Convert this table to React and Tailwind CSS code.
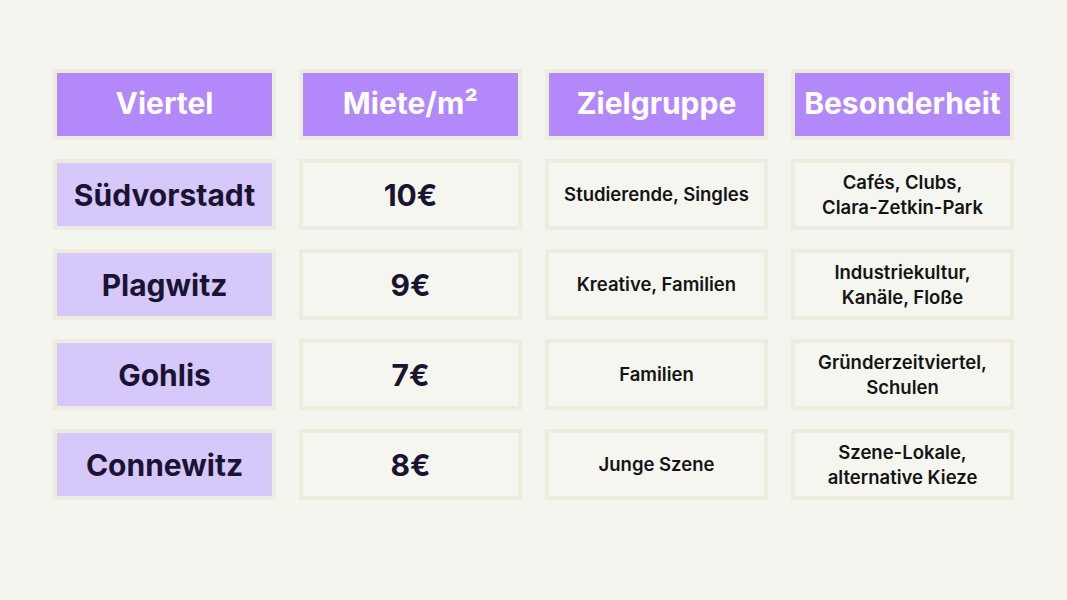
import React from 'react'

const headers = ['Viertel', 'Miete/m²', 'Zielgruppe', 'Besonderheit']

const rows = [
  { name: 'Südvorstadt', rent: '10€', group: 'Studierende, Singles', extra: ['Cafés, Clubs,', 'Clara-Zetkin-Park'] },
  { name: 'Plagwitz', rent: '9€', group: 'Kreative, Familien', extra: ['Industriekultur,', 'Kanäle, Floße'] },
  { name: 'Gohlis', rent: '7€', group: 'Familien', extra: ['Gründerzeitviertel,', 'Schulen'] },
  { name: 'Connewitz', rent: '8€', group: 'Junge Szene', extra: ['Szene-Lokale,', 'alternative Kieze'] },
]

const cell = 'h-[71px] border-4 border-[#edecdf] flex items-center justify-center text-center'

export default function App() {
  return (
    <div className="w-[1067px] h-[600px] bg-[#f5f5f0] pt-[69px] pl-[53px]" style={{ fontFamily: 'Inter, "Noto Sans", sans-serif' }}>
      <div className="grid grid-cols-[223px_223px_223px_223px] gap-x-[23px] gap-y-[19px]">
        {headers.map(h => (
          <div key={h} className={`${cell} bg-[#b388fb] text-white text-[30px] font-bold pb-[2px]`}>{h}</div>
        ))}
        {rows.map(r => (
          <React.Fragment key={r.name}>
            <div className={`${cell} bg-[#d6c8fb] text-[#1a1433] text-[30px] font-bold pt-[2px]`}>{r.name}</div>
            <div className={`${cell} bg-[#f6f6f0] text-[#1a1433] text-[30px] font-bold pt-[2px]`}>{r.rent}</div>
            <div className={`${cell} bg-[#f6f6f0] text-[#141414] text-[18.5px] font-semibold`}>{r.group}</div>
            <div className={`${cell} bg-[#f6f6f0] text-[#141414] text-[18.5px] font-semibold leading-[25px] flex-col`}>
              {r.extra.map(t => <span key={t}>{t}</span>)}
            </div>
          </React.Fragment>
        ))}
      </div>
    </div>
  )
}
